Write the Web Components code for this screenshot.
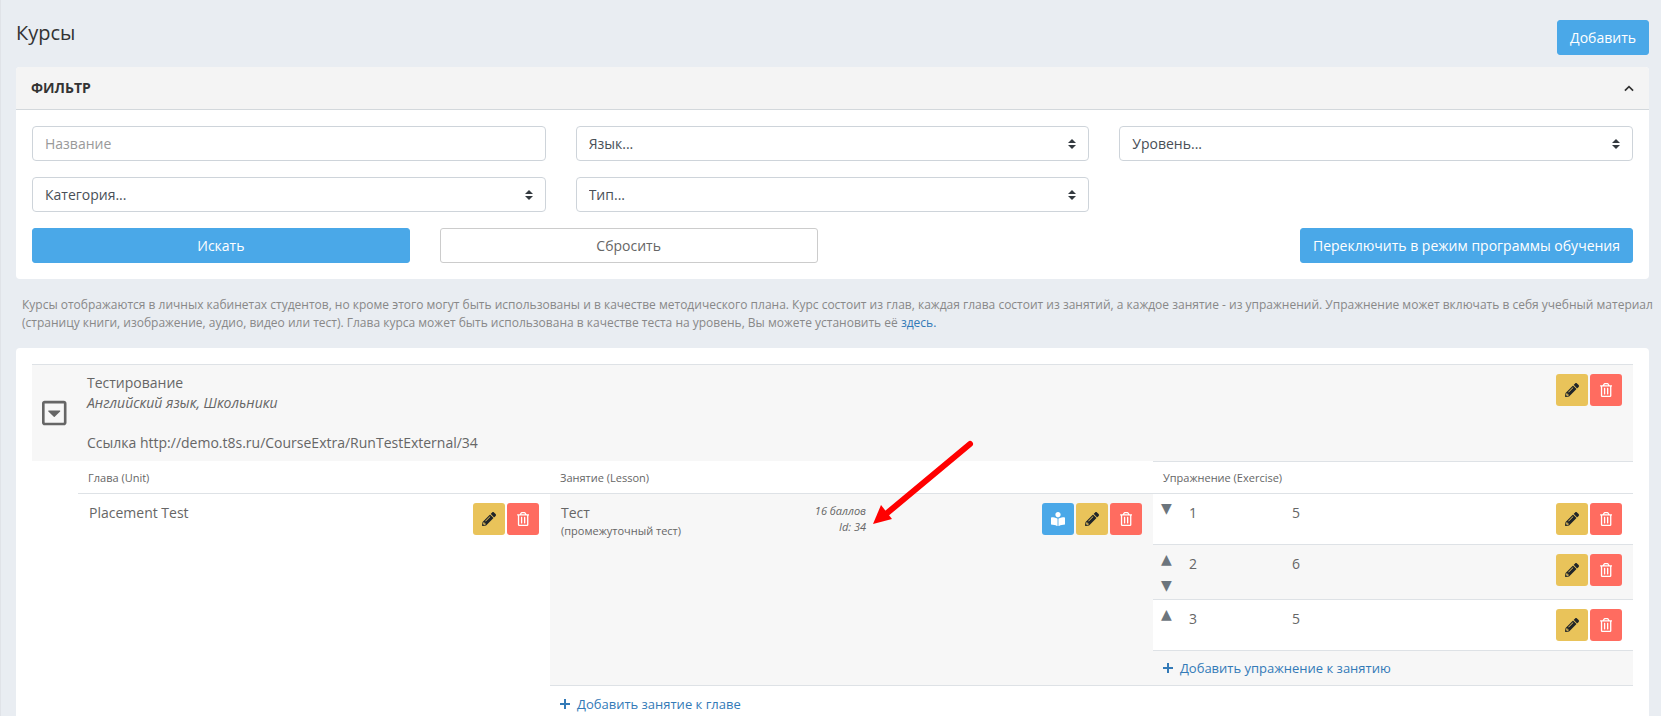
<!DOCTYPE html>
<html lang="ru">
<head>
<meta charset="utf-8">
<meta name="viewport" content="width=device-width, initial-scale=1">
<title>Курсы</title>
<style>
  html { background: #e9edf2; }
  body {
    margin: 0;
    font: 14px/20px "Open Sans", "Noto Sans", sans-serif;
    color: #666;
  }
</style>
</head>
<body>
<courses-page></courses-page>

<script>
const BASE = `<style>
  :host { display: block; box-sizing: border-box; }
  *, *::before, *::after { box-sizing: border-box; }
  a { color: #337ab7; text-decoration: none; }
  button { font: inherit; cursor: pointer; }
</style>`;

class BaseElement extends HTMLElement {
  connectedCallback() {
    if (this.shadowRoot) return;
    this.attachShadow({ mode: 'open' }).innerHTML = BASE + this.render();
  }
}

const ICONS = {
  edit: ['0 0 512 512', 'M497.9 142.1l-46.1 46.1c-4.7 4.7-12.3 4.7-17 0l-111-111c-4.7-4.7-4.7-12.3 0-17l46.1-46.1c18.7-18.7 49.1-18.7 67.9 0l60.1 60.1c18.8 18.7 18.8 49.1 0 67.9zM284.2 99.8L21.6 362.4.4 483.9c-2.9 16.4 11.4 30.6 27.8 27.8l121.5-21.3 262.6-262.6c4.7-4.7 4.7-12.3 0-17l-111-111c-4.8-4.7-12.4-4.7-17.1 0zM124.1 339.9c-5.5-5.5-5.5-14.3 0-19.8l154-154c5.5-5.5 14.3-5.5 19.8 0s5.5 14.3 0 19.8l-154 154c-5.5 5.5-14.3 5.5-19.8 0zM88 424h48v36.3l-64.5 11.3-31.1-31.1L51.7 376H88v48z'],
  remove: ['0 0 448 512', 'M268 416h24a12 12 0 0 0 12-12V188a12 12 0 0 0-12-12h-24a12 12 0 0 0-12 12v216a12 12 0 0 0 12 12zM432 80h-82.41l-34-56.7A48 48 0 0 0 274.41 0H173.59a48 48 0 0 0-41.16 23.3L98.41 80H16A16 16 0 0 0 0 96v16a16 16 0 0 0 16 16h16v336a48 48 0 0 0 48 48h288a48 48 0 0 0 48-48V128h16a16 16 0 0 0 16-16V96a16 16 0 0 0-16-16zM171.84 50.91A6 6 0 0 1 177 48h94a6 6 0 0 1 5.15 2.91L293.61 80H154.39zM368 464H80V128h288zm-212-48h24a12 12 0 0 0 12-12V188a12 12 0 0 0-12-12h-24a12 12 0 0 0-12 12v216a12 12 0 0 0 12 12z'],
  read: ['0 0 512 512', 'M352 96c0-53.02-42.98-96-96-96s-96 42.98-96 96 42.98 96 96 96 96-42.98 96-96zM233.59 241.1c-59.33-36.32-155.43-46.3-203.79-49.05C13.55 191.13 0 203.51 0 219.14v222.8c0 14.33 11.59 26.28 26.49 27.05 43.66 2.29 131.99 10.68 193.04 41.43 9.37 4.72 20.48-1.71 20.48-11.87V252.56c-.01-4.67-2.32-8.95-6.42-11.46zm248.61-49.05c-48.35 2.74-144.46 12.73-203.78 49.05-4.1 2.51-6.41 6.96-6.41 11.63v245.79c0 10.19 11.14 16.63 20.54 11.9 61.04-30.72 149.32-39.11 192.97-41.4 14.9-.78 26.49-12.73 26.49-27.06V219.14c-.01-15.63-13.56-28.01-29.8-27.09z'],
  collapse: ['0 0 448 512', 'M125.1 208h197.8c10.7 0 16.1 13 8.5 20.5l-98.9 98.3c-4.7 4.7-12.2 4.7-16.9 0l-98.9-98.3c-7.7-7.5-2.3-20.5 8.4-20.5zM448 80v352c0 26.5-21.5 48-48 48H48c-26.5 0-48-21.5-48-48V80c0-26.5 21.5-48 48-48h352c26.5 0 48 21.5 48 48zm-48 346V86c0-3.3-2.7-6-6-6H54c-3.3 0-6 2.7-6 6v340c0 3.3 2.7 6 6 6h340c3.3 0 6-2.7 6-6z'],
  plus: ['0 0 10 10', 'M4 0h2v4h4v2H6v4H4V6H0V4h4z'],
  chevron: ['0 0 10 7', 'M5 .4L9.700 5.100 8.500 6.300 5 2.800 1.500 6.300 .3 5.100z']
};
const icon = (name, height) => {
  const [box, d] = ICONS[name];
  return `<svg viewBox="${box}" height="${height}" fill="currentColor" aria-hidden="true"><path d="${d}"/></svg>`;
};

/* Text button; variant "primary" (default) or "plain" */
customElements.define('app-button', class extends BaseElement {
  render() {
    return `<style>
      button { display: block; width: 100%; height: 35px; padding: 0 12px; border: 1px solid #4aa8e8; border-radius: 3px;
               background: #4aa8e8; color: #fff; white-space: nowrap; }
      :host([variant="plain"]) button { background: #fff; border-color: #ccc; color: #666; }
    </style><button type="button"><slot></slot></button>`;
  }
});

/* Row of square icon buttons, listed in the "kinds" attribute */
customElements.define('row-actions', class extends BaseElement {
  render() {
    const names = { read: 'Просмотр', edit: 'Изменить', remove: 'Удалить' };
    return `<style>
      :host { display: flex; justify-content: flex-end; gap: 2px; }
      button { display: flex; align-items: center; justify-content: center; width: 32px; height: 32px; padding: 0;
               border: 0; border-radius: 3px; color: #fff; }
      .read { background: #4aa8e8; }
      .edit { background: #e9c35a; color: #212529; }
      .remove { background: #ff6c60; }
    </style>` + this.getAttribute('kinds').split(' ').map(k =>
      `<button type="button" class="${k}" aria-label="${names[k]}">${icon(k, 14)}</button>`).join('');
  }
});

customElements.define('text-field', class extends BaseElement {
  render() {
    const label = this.getAttribute('label');
    return `<style>
      input { display: block; width: 100%; height: 35px; padding: 0 12px; border: 1px solid #ced4da; border-radius: 4px;
              background: #fff; color: #495057; font: inherit; }
      input::placeholder { color: #999; opacity: 1; }
    </style><input type="text" aria-label="${label}" placeholder="${label}">`;
  }
});

customElements.define('select-field', class extends BaseElement {
  render() {
    const label = this.getAttribute('label');
    return `<style>
      select { display: block; width: 100%; height: 35px; padding: 0 28px 0 12px; border: 1px solid #ced4da; border-radius: 4px;
               appearance: none; color: #495057; font: inherit;
               background: #fff url("data:image/svg+xml,%3Csvg xmlns='http://www.w3.org/2000/svg' viewBox='0 0 4 5'%3E%3Cpath fill='%23343a40' d='M2 0L0 2h4zm0 5L0 3h4z'/%3E%3C/svg%3E") no-repeat right 12px center / 8px 10px; }
    </style><select aria-label="${label}"><option>${label}...</option></select>`;
  }
});

customElements.define('add-link', class extends BaseElement {
  render() {
    return `<style>
      a { display: inline-flex; align-items: center; gap: 7px; font-size: 13px; }
    </style><a href="#">${icon('plus', 10)}<slot></slot></a>`;
  }
});

customElements.define('filter-panel', class extends BaseElement {
  render() {
    return `<style>
      :host { background: #fff; border-radius: 4px; overflow: hidden; }
      header { display: flex; align-items: center; justify-content: space-between; height: 43px; padding: 0 15px;
               background: #f4f4f4; border-bottom: 1px solid #d3d8dc; color: #333; }
      h2 { margin: 0; font-size: 14px; line-height: 20px; text-transform: uppercase; }
      header button { display: flex; padding: 0; border: 0; background: none; color: inherit; }
      .fields, .buttons { display: grid; gap: 16px 30px; padding: 16px 16px 0; }
      .fields { grid-template-columns: repeat(3, 1fr); }
      .buttons { grid-template-columns: repeat(4, 1fr); padding-bottom: 16px; }
      .mode { grid-column: 3 / 5; justify-self: end; }
    </style>
    <header><h2>Фильтр</h2><button type="button" aria-label="Свернуть">${icon('chevron', 7)}</button></header>
    <form>
      <div class="fields">
        <text-field label="Название"></text-field>
        <select-field label="Язык"></select-field>
        <select-field label="Уровень"></select-field>
        <select-field label="Категория"></select-field>
        <select-field label="Тип"></select-field>
      </div>
      <div class="buttons">
        <app-button>Искать</app-button>
        <app-button variant="plain">Сбросить</app-button>
        <app-button class="mode">Переключить в режим программы обучения</app-button>
      </div>
    </form>`;
  }
});

/* Red pointer drawn over the table, ending beside the lesson id */
customElements.define('red-pointer', class extends BaseElement {
  render() {
    return `<style>
      :host { position: absolute; left: 100%; bottom: 0; pointer-events: none; }
      svg { display: block; }
    </style>
    <svg width="112" height="100" viewBox="0 0 112 100" fill="#f00" aria-hidden="true">
      <path d="M104 9L20 79" stroke="#f00" stroke-width="6" stroke-linecap="round"/>
      <path d="M7 89L15 70 26 84z"/>
    </svg>`;
  }
});

customElements.define('course-table', class extends BaseElement {
  exercise(number, score, arrows) {
    const names = { '▲': 'Выше', '▼': 'Ниже' };
    return `<td class="move">${arrows.map(a => `<button type="button" aria-label="${names[a]}">${a}</button>`).join('')}</td>
      <td>${number}</td><td>${score}</td><td class="act"><row-actions kinds="edit remove"></row-actions></td>`;
  }
  render() {
    return `<style>
      :host { background: #fff; border-radius: 4px 4px 0 0; padding: 16px 16px 0; }
      table { width: 100%; table-layout: fixed; border-collapse: separate; border-spacing: 0; }
      td, th { padding: 9px 11px; vertical-align: top; text-align: left; font-weight: 400; }
      .course td { background: #f7f7f7; border-top: 1px solid #dee2e6; padding: 8px 9px; }
      .course .toggle { vertical-align: middle; padding: 8px 10px; }
      .course p { margin: 0; min-height: 20px; }
      .toggle button { display: flex; padding: 0; border: 0; background: none; color: #666; }
      .toggle svg { flex: none; }
      .course .act { padding: 9px 11px; }
      th { height: 33px; padding: 7px 10px 5px; font-size: 11px; border-bottom: 1px solid #dee2e6; }
      th.exercise { border-top: 1px solid #dee2e6; padding-top: 6px; }
      .item td { border-bottom: 1px solid #dee2e6; }
      .item td.unit { border: 0; }
      .shade td:not(.unit):not(.lesson), td.lesson { background: #f7f7f7; }
      .item td.move { padding: 1px 8px; }
      .move button { display: block; height: 26px; padding: 0; border: 0; background: none; color: #6c757d;
                     font: 14px/26px "DejaVu Sans", sans-serif; }
      .item td.new { padding: 7px 10px; }
      td.new { height: 35px; padding: 8px 10px; }
      .split { display: flex; justify-content: space-between; }
      .lessons { display: grid; grid-template-columns: 12fr 9fr 19fr; }
      small { display: block; font-size: 11px; line-height: 16px; }
      .meta { position: relative; align-self: start; text-align: right; font-style: italic; }
    </style>
    <table>
      <colgroup>
        <col style="width:46px"><col style="width:472px"><col>
        <col style="width:25px"><col style="width:103px"><col style="width:192px"><col style="width:160px">
      </colgroup>
      <tbody>
        <tr class="course">
          <td class="toggle"><button type="button" aria-label="Свернуть курс">${icon('collapse', 28)}</button></td>
          <td colspan="5"><p>Тестирование</p><p><i>Английский язык, Школьники</i></p><p></p><p>Ссылка http://demo.t8s.ru/CourseExtra/RunTestExternal/34</p></td>
          <td class="act"><row-actions kinds="edit remove"></row-actions></td>
        </tr>
        <tr>
          <td rowspan="6"></td>
          <th scope="col">Глава (Unit)</th>
          <th scope="col">Занятие (Lesson)</th>
          <th scope="col" colspan="4" class="exercise">Упражнение (Exercise)</th>
        </tr>
        <tr class="item">
          <td class="unit" rowspan="5"><div class="split">Placement Test<row-actions kinds="edit remove"></row-actions></div></td>
          <td class="lesson" rowspan="4">
            <div class="lessons">
              <div>Тест<small>(промежуточный тест)</small></div>
              <div class="meta"><small>16 баллов</small><small>Id: 34</small><red-pointer></red-pointer></div>
              <row-actions kinds="read edit remove"></row-actions>
            </div>
          </td>
          ${this.exercise(1, 5, ['▼'])}
        </tr>
        <tr class="item shade">${this.exercise(2, 6, ['▲', '▼'])}</tr>
        <tr class="item">${this.exercise(3, 5, ['▲'])}</tr>
        <tr class="item shade"><td class="new" colspan="4"><add-link>Добавить упражнение к занятию</add-link></td></tr>
        <tr><td class="new" colspan="5"><add-link>Добавить занятие к главе</add-link></td></tr>
      </tbody>
    </table>`;
  }
});

customElements.define('courses-page', class extends BaseElement {
  render() {
    return `<style>
      :host { display: flex; flex-direction: column; min-height: 100vh; padding: 0 0 0 15px; border-left: 1px solid #e0e3e8; }
      .top { display: flex; justify-content: space-between; align-items: flex-start; padding: 20px 0 12px; }
      .top, filter-panel, course-table { margin-right: 12px; }
      h1 { margin: 0; font-size: 20px; line-height: 26px; font-weight: 400; color: #333; }
      .note { margin: 0; padding: 17px 0 16px 6px; font-size: 12px; line-height: 18px; color: #888; }
      course-table { flex: 1; }
    </style>
    <div class="top"><h1>Курсы</h1><app-button>Добавить</app-button></div>
    <filter-panel></filter-panel>
    <p class="note">Курсы отображаются в личных кабинетах студентов, но кроме этого могут быть использованы и в качестве методического плана. Курс состоит из глав, каждая глава состоит из занятий, а каждое занятие - из упражнений. Упражнение может включать в себя учебный материал (страницу книги, изображение, аудио, видео или тест). Глава курса может быть использована в качестве теста на уровень, Вы можете установить её <a href="#">здесь.</a></p>
    <course-table></course-table>`;
  }
});
</script>
</body>
</html>
